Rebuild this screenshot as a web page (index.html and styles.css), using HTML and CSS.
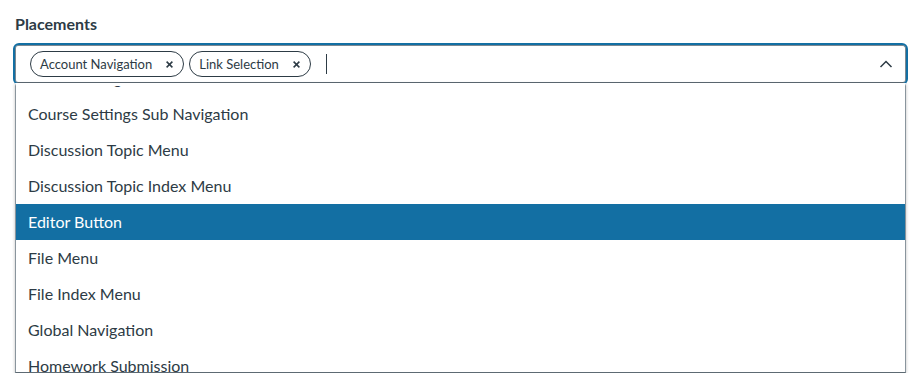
FILE: index.html
```html
<!DOCTYPE html>
<html lang="en">
<head>
<meta charset="utf-8">
<title>Placements</title>
<link rel="stylesheet" href="styles.css">
</head>
<body>
<div class="field">
  <label class="label">Placements</label>
  <div class="select">
    <div class="input">
      <span class="tag"><span class="tag-text">Account Navigation</span><svg class="tag-x" width="7" height="7" viewBox="0 0 7 7"><path d="M0.6 0.6 L6.4 6.4 M6.4 0.6 L0.6 6.4" fill="none" stroke="#2d3b45" stroke-width="1.5"/></svg></span>
      <span class="tag"><span class="tag-text">Link Selection</span><svg class="tag-x" width="7" height="7" viewBox="0 0 7 7"><path d="M0.6 0.6 L6.4 6.4 M6.4 0.6 L0.6 6.4" fill="none" stroke="#2d3b45" stroke-width="1.5"/></svg></span>
      <span class="caret"></span>
      <svg class="chevron" width="14" height="10" viewBox="0 0 14 10"><path d="M1.5 8 L7 2.5 L12.5 8" fill="none" stroke="#2d3b45" stroke-width="1.5"/></svg>
    </div>
    <div class="menu">
      <ul class="list">
        <li class="item">Course Navigation</li>
        <li class="item">Course Settings Sub Navigation</li>
        <li class="item">Discussion Topic Menu</li>
        <li class="item">Discussion Topic Index Menu</li>
        <li class="item active">Editor Button</li>
        <li class="item">File Menu</li>
        <li class="item">File Index Menu</li>
        <li class="item">Global Navigation</li>
        <li class="item">Homework Submission</li>
      </ul>
    </div>
  </div>
</div>
</body>
</html>
```

FILE: styles.css
```css
html, body {
  margin: 0;
  padding: 0;
  background: #ffffff;
}
body {
  font-family: Lato, "Open Sans", "Liberation Sans", sans-serif;
  color: #2d3b45;
}
.field {
  padding: 14px 12px 0 15px;
}
.label {
  display: block;
  font-size: 16px;
  font-weight: 700;
  line-height: 20px;
  margin-bottom: 11px;
}
.select {
  position: relative;
}
.input {
  position: relative;
  box-sizing: border-box;
  height: 38px;
  border: 1px solid #7c8891;
  border-bottom-color: #5d6a73;
  border-radius: 3px;
  display: flex;
  align-items: center;
  padding: 0 12px 0 14px;
  gap: 5px;
}
.input::before {
  content: "";
  position: absolute;
  top: -3px;
  left: -3px;
  right: -3px;
  bottom: -3px;
  border: 2px solid #136fa3;
  border-radius: 6px;
  pointer-events: none;
}
.tag {
  box-sizing: border-box;
  height: 26px;
  border: 1px solid #2d3b45;
  border-radius: 13px;
  display: inline-flex;
  align-items: center;
  padding: 0 10px 0 9px;
  font-size: 13px;
}
.tag-x {
  margin-left: 14px;
  display: block;
}
.caret {
  width: 1px;
  height: 20px;
  background: #2d3b45;
  margin-left: 10px;
}
.chevron {
  margin-left: auto;
}
.menu {
  position: relative;
  z-index: 2;
  box-sizing: border-box;
  height: 290px;
  overflow: hidden;
  background: #ffffff;
  border: 1px solid #8a959d;
  border-top: 3px solid #ffffff;
  border-bottom-color: #5d6a73;
  box-shadow: 0 1px 3px rgba(0, 0, 0, 0.25);
}
.list {
  list-style: none;
  margin: -26px 0 0 0;
  padding: 0;
}
.item {
  height: 36px;
  line-height: 36px;
  padding-left: 12px;
  font-size: 16px;
  color: #2d3b45;
}
.item.active {
  background: #136fa3;
  color: #ffffff;
}
```
